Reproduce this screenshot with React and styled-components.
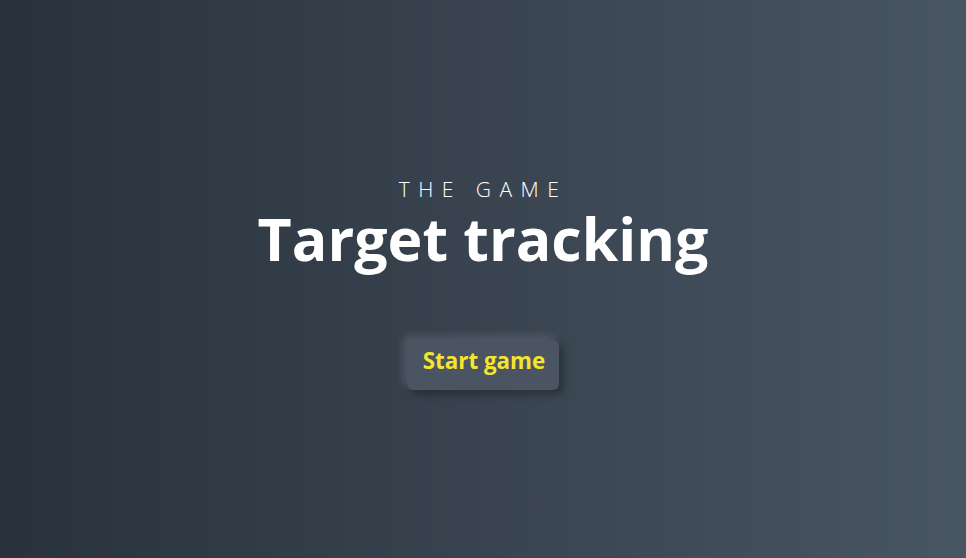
import React from "react";
import styled, { createGlobalStyle } from "styled-components";

const GlobalStyle = createGlobalStyle`
  html, body {
    margin: 0;
    padding: 0;
    height: 100%;
  }
  body {
    font-family: "Open Sans", "Liberation Sans", sans-serif;
  }
  #root {
    height: 100%;
  }
`;

const Screen = styled.div`
  box-sizing: border-box;
  height: 100vh;
  padding-top: 8px;
  background: linear-gradient(90deg, #29323c 0%, #485563 100%);
  display: flex;
  flex-direction: column;
  align-items: center;
  justify-content: center;
  color: #fff;
  text-align: center;
`;

const Intro = styled.div`
  display: flex;
  flex-direction: column;
  align-items: center;
`;

const Kicker = styled.p`
  margin: 0 0 5px;
  font-weight: 300;
  font-size: 21px;
  letter-spacing: 8.5px;
  line-height: 24px;
`;

const Title = styled.h1`
  margin: 0;
  font-weight: 700;
  font-size: 59px;
  line-height: 64px;
`;

const StartButton = styled.button`
  margin-top: 70px;
  height: 50px;
  padding: 0 14px 8px 16px;
  border: none;
  border-radius: 6px;
  background: #4a5462;
  color: #f5e52c;
  font-family: inherit;
  font-weight: 700;
  font-size: 22.4px;
  cursor: pointer;
  box-shadow: -4px -4px 8px rgba(255, 255, 255, 0.14),
    4px 4px 8px rgba(0, 0, 0, 0.35);
`;

const App = () => {
  return (
    <>
      <GlobalStyle />
      <Screen>
        <Intro>
          <Kicker>THE GAME</Kicker>
          <Title>Target tracking</Title>
        </Intro>
        <StartButton>Start game</StartButton>
      </Screen>
    </>
  );
};

export default App;
